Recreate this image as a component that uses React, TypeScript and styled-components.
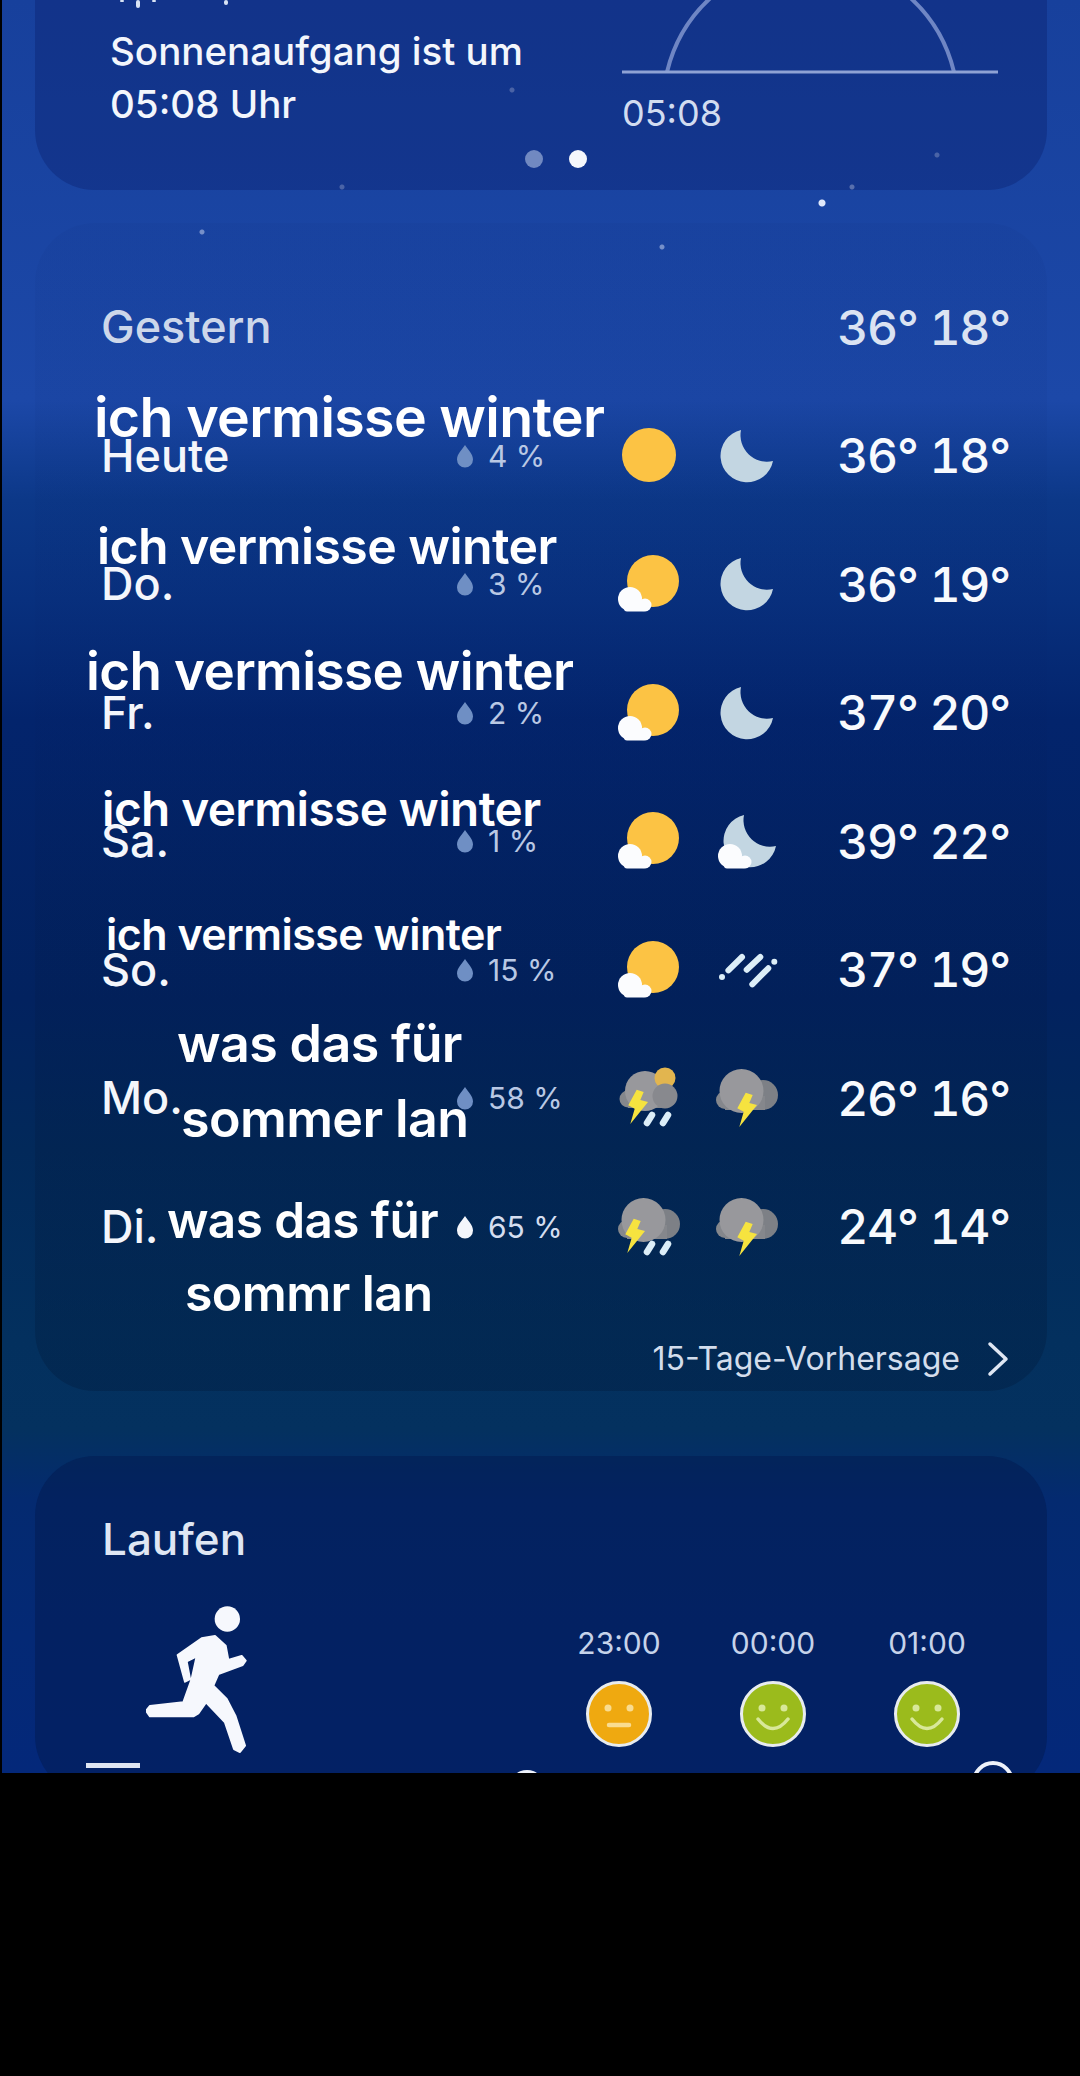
import React from 'react';
import styled, { createGlobalStyle } from 'styled-components';

const GlobalStyle = createGlobalStyle`
  html, body {
    margin: 0;
    padding: 0;
    background: #000;
  }
  * {
    box-sizing: border-box;
  }
`;

type SkyIcon = 'sun' | 'sunCloud' | 'moon' | 'moonCloud' | 'rain' | 'stormRainSun' | 'stormRain' | 'storm';

type Caption = {
  text: string;
  left: number;
  top: number;
  size: number;
};

type Day = {
  name: string;
  rain: string;
  solidDrop?: boolean;
  day: SkyIcon;
  night: SkyIcon;
  temps: string;
  captions: Caption[];
};

const days: Day[] = [
  { name: 'Heute', rain: '4 %', day: 'sun', night: 'moon', temps: '36° 18°', captions: [{ text: 'ich vermisse winter', left: -7, top: -49, size: 55.5 }] },
  { name: 'Do.', rain: '3 %', day: 'sunCloud', night: 'moon', temps: '36° 19°', captions: [{ text: 'ich vermisse winter', left: -4, top: -45, size: 50 }] },
  { name: 'Fr.', rain: '2 %', day: 'sunCloud', night: 'moon', temps: '37° 20°', captions: [{ text: 'ich vermisse winter', left: -15, top: -50, size: 53 }] },
  { name: 'Sa.', rain: '1 %', day: 'sunCloud', night: 'moonCloud', temps: '39° 22°', captions: [{ text: 'ich vermisse winter', left: 1, top: -37, size: 47.7 }] },
  { name: 'So.', rain: '15 %', day: 'sunCloud', night: 'rain', temps: '37° 19°', captions: [{ text: 'ich vermisse winter', left: 5, top: -38, size: 43 }] },
  {
    name: 'Mo.',
    rain: '58 %',
    day: 'stormRainSun',
    night: 'storm',
    temps: '26° 16°',
    captions: [
      { text: 'was das für', left: 76, top: -62, size: 52 },
      { text: 'sommer lan', left: 80, top: 13, size: 52 },
    ],
  },
  {
    name: 'Di.',
    rain: '65 %',
    solidDrop: true,
    day: 'stormRain',
    night: 'storm',
    temps: '24° 14°',
    captions: [
      { text: 'was das für', left: 66, top: -13, size: 49.5 },
      { text: 'sommr lan', left: 84, top: 59, size: 50 },
    ],
  },
];

const hours = [
  { time: '23:00', good: false },
  { time: '00:00', good: true },
  { time: '01:00', good: true },
];

const Cloud = ({ x = 0, y = 0 }: { x?: number; y?: number }) => (
  <g transform={`translate(${x} ${y})`} fill="#fbfcfe">
    <circle cx="30" cy="55" r="12" />
    <circle cx="45" cy="61" r="6.5" />
    <rect x="24" y="56" width="22" height="11.5" rx="3" />
  </g>
);

const MoonShape = ({ x = 0, y = 0 }: { x?: number; y?: number }) => (
  <path
    transform={`translate(${x} ${y})`}
    d="M43 14A26.5 26.5 0 1 0 75 45A26.5 26.5 0 0 1 43 14Z"
    fill="#c3d6e2"
  />
);

const Bolt = ({ x = 0, y = 0 }: { x?: number; y?: number }) => (
  <polygon
    transform={`translate(${x} ${y})`}
    points="47.7,34.7 54.7,37 51.3,45 59,47 41.3,69 45.7,53.7 39.3,50.3"
    fill="#f6e33f"
  />
);

const StormCloud = () => (
  <g>
    <circle cx="65" cy="37" r="15" fill="#7d8086" />
    <circle cx="27" cy="42" r="9" fill="#85878c" />
    <rect x="27" y="38" width="40" height="14" fill="#85878c" />
    <circle cx="43.5" cy="33" r="22" fill="#98989c" />
  </g>
);

// flatter cloud, the sun sits between its two bumps
const SunStormCloud = () => (
  <g>
    <circle cx="28" cy="41" r="8.5" fill="#85878c" />
    <rect x="28" y="36" width="40" height="14" fill="#85878c" />
    <circle cx="45" cy="33" r="20" fill="#98989c" />
    <circle cx="65" cy="20" r="10.5" fill="#e2b54f" />
    <circle cx="65" cy="38" r="12.5" fill="#88898e" />
  </g>
);

const RainDashes = () => (
  <g stroke="#dceef8" strokeWidth="6.5" strokeLinecap="round">
    <line x1="47" y1="65" x2="52" y2="57" />
    <line x1="63" y1="65" x2="68" y2="57" />
  </g>
);

const WeatherIcon = ({ name }: { name: SkyIcon }) => (
  <svg width="98" height="80" viewBox="0 0 98 80">
    {name === 'sun' && <circle cx="49" cy="39" r="27" fill="#fcc344" />}
    {name === 'sunCloud' && (
      <>
        <circle cx="53" cy="37" r="26" fill="#fcc344" />
        <Cloud />
      </>
    )}
    {name === 'moon' && <MoonShape />}
    {name === 'moonCloud' && (
      <>
        <MoonShape x={3} y={0} />
        <Cloud x={2} />
      </>
    )}
    {name === 'rain' && (
      <g stroke="#dceef8" strokeWidth="6" strokeLinecap="round">
        <line x1="24" y1="47" x2="24" y2="47" />
        <line x1="30.4" y1="40.3" x2="44" y2="27" />
        <line x1="48.7" y1="39.7" x2="62.3" y2="27" />
        <line x1="76.3" y1="31.7" x2="76.3" y2="31.7" />
        <line x1="54.3" y1="54.3" x2="70.3" y2="38.3" />
      </g>
    )}
    {name === 'stormRainSun' && (
      <>
        <SunStormCloud />
        <Bolt x={-11} y={-3} />
        <RainDashes />
      </>
    )}
    {name === 'stormRain' && (
      <>
        <StormCloud />
        <Bolt x={-14} y={-3} />
        <RainDashes />
      </>
    )}
    {name === 'storm' && (
      <>
        <StormCloud />
        <Bolt />
      </>
    )}
  </svg>
);

const Drop = ({ solid }: { solid?: boolean }) => (
  <svg width="18" height="24" viewBox="0 0 18 24">
    <path
      d="M9 1C6 6 1 10 1 15.5A8 8 0 0 0 17 15.5C17 10 12 6 9 1Z"
      fill={solid ? '#f4f6fb' : '#6f8fc4'}
    />
  </svg>
);

const Runner = () => (
  <svg width="104" height="150" viewBox="48 15 312 450">
    <circle cx="292" cy="60" r="38" fill="#f6f8fd" />
    <polygon
      points="165,248 143,168 215,118 255,111 287,140 295,183 335,171 347,185 338,198 265,225 250,260 290,300 316,350 345,440 330,459 312,450 285,370 228,310 205,343 190,352 60,352 48,335 60,321 160,310 185,240 200,172 170,187 180,240"
      fill="#f6f8fd"
      stroke="#f6f8fd"
      strokeWidth="6"
      strokeLinejoin="round"
    />
  </svg>
);

const Face = ({ good }: { good: boolean }) => {
  const mark = good ? '#d8e89a' : '#f9dc90';
  return (
    <FaceCircle $good={good}>
      <svg width="60" height="60" viewBox="0 0 60 60">
        <circle cx="19" cy="24" r="3.5" fill={mark} />
        <circle cx="41" cy="24" r="3.5" fill={mark} />
        {good ? (
          <path d="M15 35Q30 54 45 35" fill="none" stroke={mark} strokeWidth="3.5" strokeLinecap="round" />
        ) : (
          <path d="M20 41H40" fill="none" stroke={mark} strokeWidth="4.5" strokeLinecap="round" />
        )}
      </svg>
    </FaceCircle>
  );
};

const App = () => (
  <Page>
    <GlobalStyle />
    <Screen>
      <SunCard>
        <SunBody>
          <SunText>
            <RainMarks>
              <i />
              <i />
              <i />
              <i />
            </RainMarks>
            Sonnenaufgang ist um
            <br />
            05:08 Uhr
          </SunText>
          <SunChart>
            <svg width="380" height="74" viewBox="0 0 380 74">
              <path d="M45 72A147.6 147.6 0 0 1 332 72" fill="none" stroke="#6f86c4" strokeWidth="4" />
              <line x1="0" y1="72" x2="376" y2="72" stroke="#8ea2d4" strokeWidth="3" />
            </svg>
            <SunTime>05:08</SunTime>
          </SunChart>
        </SunBody>
        <Dots>
          <Dot />
          <Dot $active />
        </Dots>
      </SunCard>

      <ForecastCard>
        <Row>
          <DayName $muted>Gestern</DayName>
          <Temps $muted>36° 18°</Temps>
        </Row>
        {days.map((d) => (
          <Row key={d.name}>
            <DayName>
              {d.name}
              {d.captions.map((c) => (
                <CaptionText key={c.text} $left={c.left} $top={c.top} $size={c.size}>
                  {c.text}
                </CaptionText>
              ))}
            </DayName>
            <Rain $solid={d.solidDrop}>
              <Drop solid={d.solidDrop} />
              {d.rain}
            </Rain>
            <IconCell>
              <WeatherIcon name={d.day} />
            </IconCell>
            <IconCell>
              <WeatherIcon name={d.night} />
            </IconCell>
            <Temps>{d.temps}</Temps>
          </Row>
        ))}
        <MoreLink>
          15-Tage-Vorhersage
          <svg width="24" height="36" viewBox="0 0 24 36">
            <path d="M4 3L20 18L4 33" fill="none" stroke="#dfe6f2" strokeWidth="3.5" strokeLinecap="round" strokeLinejoin="round" />
          </svg>
        </MoreLink>
      </ForecastCard>

      <RunCard>
        <RunTitle>Laufen</RunTitle>
        <RunBody>
          <Runner />
          <Hours>
            {hours.map((h) => (
              <Hour key={h.time}>
                <HourLabel>{h.time}</HourLabel>
                <Face good={h.good} />
              </Hour>
            ))}
          </Hours>
        </RunBody>
      </RunCard>

      <BottomNav>
        <NavBar />
        <NavDot />
        <NavRing />
      </BottomNav>
    </Screen>
  </Page>
);

const Page = styled.div`
  width: 1080px;
  height: 2076px;
  background: #000;
  overflow: hidden;
`;

const Screen = styled.div`
  position: relative;
  width: 1078px;
  height: 1773px;
  margin-left: 2px;
  overflow: hidden;
  font-family: Inter, 'Liberation Sans', sans-serif;
  color: #fff;
  background-color: #1a45a4;
  background-image:
    radial-gradient(circle at 820px 203px, #dfe8fb 0 3px, transparent 4px),
    radial-gradient(circle at 850px 187px, rgba(223, 232, 251, 0.5) 0 2px, transparent 3px),
    radial-gradient(circle at 200px 232px, rgba(223, 232, 251, 0.5) 0 2px, transparent 3px),
    radial-gradient(circle at 660px 247px, rgba(223, 232, 251, 0.5) 0 2px, transparent 3px),
    radial-gradient(circle at 340px 187px, rgba(223, 232, 251, 0.4) 0 2px, transparent 3px),
    radial-gradient(circle at 935px 155px, rgba(223, 232, 251, 0.4) 0 2px, transparent 3px),
    radial-gradient(circle at 510px 90px, rgba(223, 232, 251, 0.4) 0 2px, transparent 3px),
    linear-gradient(
      180deg,
      #17409c 0,
      #1c48a8 400px,
      #0c3888 500px,
      #08307e 600px,
      #03246c 720px,
      #02225f 1000px,
      #02295a 1150px,
      #03305e 1340px,
      #04315f 1430px,
      #042a70 1500px,
      #04287a 1773px
    );
`;

const SunCard = styled.section`
  margin: -40px 33px 0;
  height: 230px;
  padding: 40px 55px 0 75px;
  border-radius: 0 0 60px 60px;
  background: rgba(8, 24, 96, 0.3);
`;

const SunBody = styled.div`
  display: flex;
  justify-content: space-between;
`;

const SunText = styled.div`
  position: relative;
  width: 470px;
  height: 130px;
  padding-top: 25px;
  font-size: 38.5px;
  font-weight: 500;
  line-height: 53px;
  color: #f3f6fc;
`;

const RainMarks = styled.div`
  position: absolute;
  left: 10px;
  top: 0;
  display: flex;
  gap: 12px;

  i {
    width: 4px;
    height: 2px;
    border-radius: 2px;
    background: #d8e3f5;
  }

  i:nth-child(2) {
    height: 8px;
  }

  i:nth-child(4) {
    height: 5px;
    margin-left: 56px;
  }
`;

const SunChart = styled.div`
  width: 400px;
  margin-right: -30px;
`;

const SunTime = styled.div`
  margin-top: 13px;
  font-size: 36px;
  line-height: 44px;
  color: #d2dcf0;
`;

const Dots = styled.div`
  display: flex;
  justify-content: center;
  gap: 26px;
  margin: 15px 0 0 10px;
`;

const Dot = styled.span<{ $active?: boolean }>`
  width: 18px;
  height: 18px;
  border-radius: 50%;
  background: ${({ $active }) => ($active ? '#f5f7fc' : '#7189c1')};
`;

const ForecastCard = styled.section`
  margin: 33px 33px 0;
  height: 1168px;
  padding: 40px 37px 0 66px;
  border-radius: 60px;
  background: linear-gradient(180deg, rgba(6, 30, 100, 0.06) 0, rgba(6, 30, 100, 0.06) 40%, rgba(0, 20, 50, 0.28) 100%);
`;

const Row = styled.div`
  display: grid;
  grid-template-columns: 355px 144px 98px 98px 1fr;
  align-items: center;
  height: 128.5px;

  &:first-child {
    grid-template-columns: 1fr auto;
  }
`;

const DayName = styled.div<{ $muted?: boolean }>`
  position: relative;
  font-size: 45px;
  font-weight: 500;
  line-height: 46px;
  color: ${({ $muted }) => ($muted ? '#cdd7ea' : '#f4f6fb')};
`;

const CaptionText = styled.span<{ $left: number; $top: number; $size: number }>`
  position: absolute;
  left: ${({ $left }) => $left}px;
  top: ${({ $top }) => $top}px;
  font-size: ${({ $size }) => $size}px;
  font-weight: 600;
  line-height: 1.2;
  letter-spacing: -0.012em;
  white-space: nowrap;
  color: #fff;
`;

const Rain = styled.div<{ $solid?: boolean }>`
  display: flex;
  align-items: center;
  gap: 14px;
  font-size: 30px;
  color: ${({ $solid }) => ($solid ? '#d5def0' : '#b9c8e4')};
`;

const IconCell = styled.div`
  display: flex;
  height: 80px;
`;

const Temps = styled.div<{ $muted?: boolean }>`
  font-size: 48px;
  font-weight: 500;
  font-variant-numeric: tabular-nums;
  letter-spacing: -0.025em;
  text-align: right;
  white-space: nowrap;
  color: ${({ $muted }) => ($muted ? '#dbe3f2' : '#f8fafd')};
`;

const MoreLink = styled.div`
  display: flex;
  justify-content: flex-end;
  align-items: center;
  gap: 26px;
  margin-top: 48px;
  font-size: 32px;
  color: #d3ddec;
`;

const RunCard = styled.section`
  margin: 65px 33px 0;
  padding: 60px 0 0 67px;
  border-radius: 60px;
  background: rgba(2, 26, 80, 0.5);
  height: 340px;
`;

const RunTitle = styled.div`
  font-size: 44px;
  font-weight: 500;
  line-height: 46px;
  color: #dfe6f3;
`;

const RunBody = styled.div`
  display: flex;
  align-items: flex-start;
  margin: 42px 0 0 44px;
`;

const Hours = styled.div`
  display: flex;
  gap: 74px;
  margin: 21px 0 0 329px;
`;

const Hour = styled.div`
  display: flex;
  flex-direction: column;
  align-items: center;
  gap: 20px;
  width: 80px;
`;

const HourLabel = styled.div`
  font-size: 30px;
  line-height: 36px;
  color: #c6d3ea;
`;

const FaceCircle = styled.div<{ $good: boolean }>`
  display: flex;
  align-items: center;
  justify-content: center;
  width: 66px;
  height: 66px;
  border-radius: 50%;
  border: 3px solid #e8ecef;
  background: ${({ $good }) => ($good ? '#9bbb1c' : '#efa910')};
`;

const BottomNav = styled.div`
  position: absolute;
  left: 84px;
  right: 66px;
  top: 1761px;
  display: flex;
  justify-content: space-between;
  align-items: flex-start;
`;

const NavBar = styled.span`
  width: 54px;
  height: 5px;
  margin-top: 2px;
  background: #dfe6f3;
`;

const NavDot = styled.span`
  width: 36px;
  height: 36px;
  margin-top: 9px;
  margin-right: 58px;
  border-radius: 50%;
  background: #eef2fa;
`;

const NavRing = styled.span`
  width: 42px;
  height: 42px;
  border-radius: 50%;
  border: 4px solid #eef2fa;
`;

export default App;
